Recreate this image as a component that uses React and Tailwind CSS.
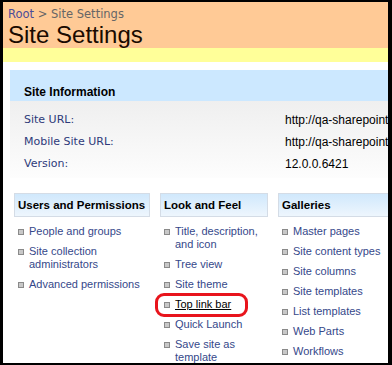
import React from 'react';

const users = [['People and groups'], ['Site collection', 'administrators'], ['Advanced permissions']];
const look = [['Title, description,', 'and icon'], ['Tree view'], ['Site theme'], ['Top link bar'], ['Quick Launch'], ['Save site as', 'template']];
const galleries = [['Master pages'], ['Site content types'], ['Site columns'], ['Site templates'], ['List templates'], ['Web Parts'], ['Workflows']];

const Column = ({ title, items, width, marked }) => (
    <div className={`${width} shrink-0`}>
        <div className="h-[24px] whitespace-nowrap border border-[#d4dce6] bg-gradient-to-b from-[#d0e8fc] to-[#eef6fd] pl-[3px] pt-[4px] text-[11.5px] font-bold leading-[14px] text-black">
            {title}
        </div>
        <ul className="mt-[8px] flex flex-col gap-[7px] pl-[4px]">
            {items.map((lines) => (
                <li key={lines[0]} className="flex items-start gap-[5px]">
                    <span className="mt-[4px] h-[6px] w-[6px] shrink-0 border border-[#8a8a8a] bg-[#c8c8c8]" />
                    <span className={`whitespace-nowrap text-[11px] leading-[13px] ${marked === lines[0] ? 'text-black underline' : 'text-[#35488a]'}`}>
                        {lines.map((l) => <div key={l}>{l}</div>)}
                    </span>
                </li>
            ))}
        </ul>
    </div>
);

export default function App() {
    return (
        <div className="relative h-[365px] w-[392px] overflow-hidden border-t-2 border-b-2 border-l-[3px] border-r-[4px] border-black bg-white font-['Liberation_Sans',sans-serif]">
            {/* title area */}
            <div className="h-[46px] bg-[#ffca96] pl-[5px] pt-[6px]">
                <div className="font-['DejaVu_Sans',sans-serif] text-[11.5px] leading-[13px] text-[#666]">
                    <span className="text-[#4c4c99]">Root</span> &gt; Site Settings
                </div>
                <div className="text-[24px] leading-[27px] text-[#1a0a00]">Site Settings</div>
            </div>
            <div className="h-[14px] bg-[#ffff99]" />
            <div className="h-[8px]" />

            {/* site information */}
            <div className="ml-[7px]">
                <div className="h-[31px] bg-[#cce8ff] pl-[14px] pt-[15px] text-[12px] font-bold leading-[14px] text-black">
                    Site Information
                </div>
                <div className="h-[77px] bg-gradient-to-b from-[#efefef] to-[#fdfdfd] pl-[14px] pt-[8px] text-[11px] leading-[22px]">
                    {[['Site URL:', 'http://qa-sharepoint:'], ['Mobile Site URL:', 'http://qa-sharepoint:'], ['Version:', '12.0.0.6421']].map(([k, v]) => (
                        <div key={k} className="flex">
                            <span className="w-[261px] shrink-0 font-['DejaVu_Sans',sans-serif] text-[#2e3a7a]">{k}</span>
                            <span className="whitespace-nowrap text-[12px] text-black">{v}</span>
                        </div>
                    ))}
                </div>
            </div>

            {/* columns */}
            <div className="mt-[15px] flex gap-[10px] pl-[11px]">
                <Column title="Users and Permissions" items={users} width="w-[136px]" />
                <Column title="Look and Feel" items={look} width="w-[108px]" marked="Top link bar" />
                <Column title="Galleries" items={galleries} width="w-[112px]" />
            </div>

            {/* annotation */}
            <div className="absolute left-[152px] top-[291px] h-[24px] w-[93px] rounded-[9px] border-[3px] border-[#e8141c]" />
        </div>
    );
}
